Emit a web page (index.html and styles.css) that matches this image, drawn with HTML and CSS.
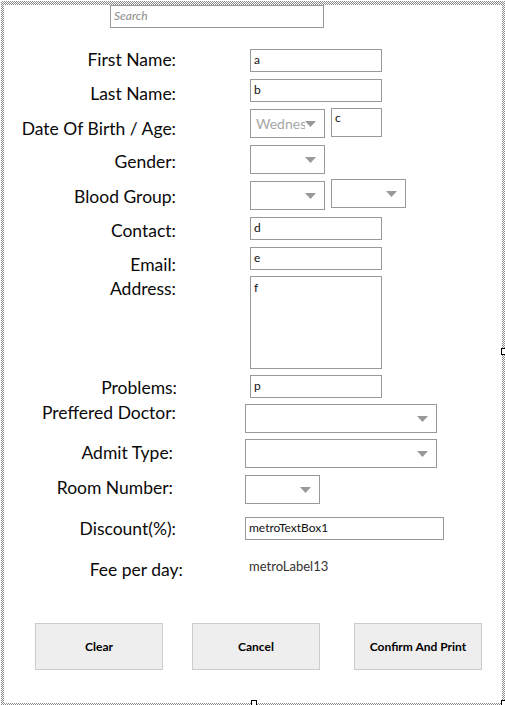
FILE: index.html
```html
<!DOCTYPE html>
<html>
<head>
<meta charset="utf-8">
<link rel="stylesheet" href="styles.css">
</head>
<body>
<div class="frame">
  <div class="canvas">
    <div class="search">Search</div>

    <div class="row r-first">
      <div class="lbl">First Name:</div>
      <div class="tb ctl-d1">a</div>
    </div>

    <div class="row r-last">
      <div class="lbl ld3">Last Name:</div>
      <div class="tb">b</div>
    </div>

    <div class="row r-dob">
      <div class="lbl ld9">Date Of Birth / Age:</div>
      <div class="ctl-group">
        <div class="combo ctl-d1"><span class="combo-text">Wednesday</span><svg class="arrow" width="11" height="6" viewBox="0 0 11 6"><polygon points="0,0 11,0 5.5,6" fill="#999"/></svg></div>
        <div class="tb tb-age">c</div>
      </div>
    </div>

    <div class="row r-gender">
      <div class="lbl ld5">Gender:</div>
      <div class="combo"><svg class="arrow" width="11" height="6" viewBox="0 0 11 6"><polygon points="0,0 11,0 5.5,6" fill="#999"/></svg></div>
    </div>

    <div class="row r-blood">
      <div class="lbl ld6">Blood Group:</div>
      <div class="ctl-group">
        <div class="combo ctl-d2"><svg class="arrow" width="11" height="6" viewBox="0 0 11 6"><polygon points="0,0 11,0 5.5,6" fill="#999"/></svg></div>
        <div class="combo"><svg class="arrow" width="11" height="6" viewBox="0 0 11 6"><polygon points="0,0 11,0 5.5,6" fill="#999"/></svg></div>
      </div>
    </div>

    <div class="row r-contact">
      <div class="lbl ld2">Contact:</div>
      <div class="tb">d</div>
    </div>

    <div class="row r-email">
      <div class="lbl ld6">Email:</div>
      <div class="tb">e</div>
    </div>

    <div class="row r-address">
      <div class="lbl ld1">Address:</div>
      <div class="tb tb-multi">f</div>
    </div>

    <div class="row r-problems">
      <div class="lbl ld1 lbl-wide1">Problems:</div>
      <div class="tb">p</div>
    </div>

    <div class="row row-b r-doctor">
      <div class="lbl">Preffered Doctor:</div>
      <div class="combo combo-wide ctl-d3"><svg class="arrow" width="11" height="6" viewBox="0 0 11 6"><polygon points="0,0 11,0 5.5,6" fill="#999"/></svg></div>
    </div>

    <div class="row row-b r-admit">
      <div class="lbl ld2 lbl-narrow">Admit Type:</div>
      <div class="combo combo-wide"><svg class="arrow" width="11" height="6" viewBox="0 0 11 6"><polygon points="0,0 11,0 5.5,6" fill="#999"/></svg></div>
    </div>

    <div class="row row-b r-room">
      <div class="lbl ld1 lbl-narrow">Room Number:</div>
      <div class="combo"><svg class="arrow" width="11" height="6" viewBox="0 0 11 6"><polygon points="0,0 11,0 5.5,6" fill="#999"/></svg></div>
    </div>

    <div class="row row-b r-discount">
      <div class="lbl">Discount(%):</div>
      <div class="tb tb-discount">metroTextBox1</div>
    </div>

    <div class="row row-b r-fee">
      <div class="lbl lbl-fee">Fee per day:</div>
      <div class="value">metroLabel13</div>
    </div>

    <div class="buttons">
      <div class="btn">Clear</div>
      <div class="btn">Cancel</div>
      <div class="btn btn-last">Confirm And Print</div>
    </div>
  </div>
  <span class="handle handle-right"></span>
  <span class="handle handle-bottom"></span>
  <span class="handle handle-corner"></span>
</div>
</body>
</html>
```

FILE: styles.css
```css
* { box-sizing: border-box; }

html, body {
  margin: 0;
  padding: 0;
  background: #ffffff;
}

body {
  font-family: Lato, "Liberation Sans", sans-serif;
  color: #000;
  width: 505px;
  height: 705px;
  overflow: hidden;
}

.frame {
  position: relative;
  margin: 1px 0 0 1px;
  width: 504px;
  height: 704px;
  padding: 3px;
  background: repeating-conic-gradient(#8a8a8a 0 25%, #ffffff 0 50%) 0 0 / 2px 2px;
}

.canvas {
  width: 100%;
  height: 100%;
  background: #ffffff;
}

.search {
  margin: 1px 0 0 106px;
  width: 214px;
  height: 23px;
  border: 1px solid #999;
  font-size: 12px;
  font-style: italic;
  color: #8c8c8c;
  line-height: 20px;
  padding-left: 3px;
}

/* rows */
.row {
  display: grid;
  grid-template-columns: 172px auto;
  column-gap: 74px;
  align-items: start;
}
.row-b { column-gap: 69px; }

.lbl {
  font-size: 17.5px;
  line-height: 22px;
  height: 22px;
  padding-top: 1px;
  text-align: right;
  white-space: nowrap;
  color: #0a0a0a;
}
.lbl-wide1 { margin-right: -1px; }
.lbl-narrow { padding-right: 3px; }
.lbl-fee { margin-right: -7px; }

.ld1 { margin-top: 1px; }
.ld2 { margin-top: 2px; }
.ld3 { margin-top: 3px; }
.ld5 { margin-top: 5px; }
.ld6 { margin-top: 6px; }
.ld9 { margin-top: 9px; }
.ctl-d1 { margin-top: 1px; }
.ctl-d2 { margin-top: 2px; }
.ctl-d3 { margin-top: 3px; }

.r-first { margin-top: 20px; }
.r-last { margin-top: 7px; }
.r-dob { margin-top: 4px; }
.r-gender { margin-top: 6px; }
.r-blood { margin-top: 5px; }
.r-contact { margin-top: 7px; }
.r-email { margin-top: 6px; }
.r-address { margin-top: 1px; }
.r-problems { margin-top: 6px; }
.r-doctor { margin-top: 3px; }
.r-admit { margin-top: 6px; }
.r-room { margin-top: 7px; }
.r-discount { margin-top: 13px; }
.r-fee { margin-top: 18px; }

.ctl-group {
  display: flex;
  align-items: flex-start;
  gap: 6px;
}

/* text boxes */
.tb {
  width: 132px;
  height: 23px;
  border: 1px solid #999;
  font-size: 12px;
  line-height: 20px;
  padding-left: 3px;
  color: #111;
}
.tb-age {
  width: 51px;
  height: 29px;
  line-height: 16px;
  padding-top: 1px;
}
.tb-multi {
  height: 93px;
  line-height: 16px;
  padding-top: 3px;
}
.tb-discount {
  width: 199px;
  padding-left: 3px;
}

/* combo boxes */
.combo {
  position: relative;
  width: 75px;
  height: 29px;
  border: 1px solid #999;
}
.combo-wide { width: 192px; }
.combo-text {
  display: block;
  width: 54px;
  overflow: hidden;
  white-space: nowrap;
  font-size: 14px;
  line-height: 27px;
  padding-left: 5px;
  color: #a6a6a6;
}
.arrow {
  position: absolute;
  right: 8px;
  top: 11px;
}

.value {
  font-size: 13px;
  line-height: 16px;
  color: #333;
  margin-left: 4px;
}

/* buttons */
.buttons {
  display: flex;
  margin: 43px 0 0 31px;
  gap: 29px;
}
.btn {
  width: 128px;
  height: 47px;
  background: #eeeeee;
  border: 1px solid #cccccc;
  font-size: 12px;
  font-weight: bold;
  display: flex;
  align-items: center;
  justify-content: center;
}
.btn-last { margin-left: 5px; }

/* designer selection handles */
.handle {
  position: absolute;
  width: 6px;
  height: 7px;
  background: #fff;
  border: 1px solid #000;
}
.handle-right { right: 0; top: 347px; width: 4px; border-right: none; }
.handle-bottom { left: 250px; bottom: 0; height: 5px; border-bottom: none; }
.handle-corner { right: 0; bottom: 0; width: 4px; height: 5px; border-right: none; border-bottom: none; }
```
